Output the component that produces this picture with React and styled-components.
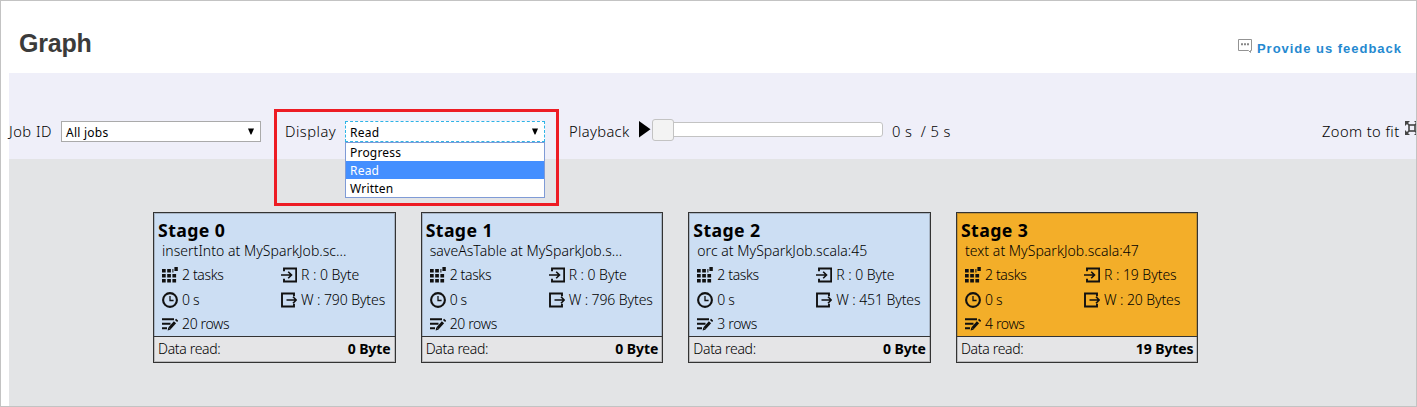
import React from "react";
import styled, { createGlobalStyle } from "styled-components";

const Global = createGlobalStyle`
  * { box-sizing: border-box; }
  body { margin: 0; background: #fff; }
`;

const Frame = styled.main`
  width: 1417px;
  height: 407px;
  border: 1px solid #c3c3c3;
  padding-left: 8px;
  display: flex;
  flex-direction: column;
  overflow: hidden;
  background: #fff;
  color: #000;
  font-family: "Noto Sans", "Open Sans", sans-serif;
`;

const Header = styled.header`
  height: 72px;
  flex: none;
  display: flex;
  justify-content: space-between;
  padding: 0 14px 0 10px;
`;

const Title = styled.h1`
  margin: 27px 0 0;
  font: bold 25px/30px "Liberation Sans", Arial, sans-serif;
  letter-spacing: -0.2px;
  color: #3b3b3b;
`;

const Feedback = styled.a`
  display: flex;
  height: 20px;
  margin-top: 37px;
  gap: 4px;
  color: #2589d0;
  font: bold 13px/22px "Liberation Sans", Arial, sans-serif;
  letter-spacing: 0.98px;
  white-space: nowrap;
`;

const Toolbar = styled.section`
  height: 86px;
  flex: none;
  display: flex;
  align-items: flex-start;
  padding-top: 36px;
  background: #efeff9;
`;

const Label = styled.span`
  font-weight: 350;
  font-size: 14.7px;
  line-height: 22px;
  white-space: pre;
  margin-top: 11px;
  flex: none;
  width: ${(p) => p.$w}px;
  letter-spacing: ${(p) => p.$ls || 0}px;
`;

const Select = styled.div`
  width: 200px;
  height: 21px;
  margin-top: 12px;
  display: flex;
  justify-content: space-between;
  padding: 0 6px 0 4px;
  background: #fff;
  border: 1px ${(p) => (p.$open ? "dashed #2fb4e6" : "solid #aaa")};
  font-size: 12px;
  line-height: 21px;
  letter-spacing: 0.25px;
  flex: none;
`;

const Arrow = styled.svg`
  width: 6px;
  height: 7px;
  margin-top: 6px;
`;

const Highlight = styled.div`
  width: 285px;
  height: 97px;
  margin: 0 10px 0 13px;
  flex: none;
  border: 3px solid #ed1c24;
  display: flex;
  padding-left: 8px;
  position: relative;
  ${Label} { margin-top: 8px; }
  ${Select} { margin-top: 9px; }
`;

const Menu = styled.ul`
  position: absolute;
  z-index: 1;
  left: 68px;
  top: 30px;
  width: 200px;
  margin: 0;
  padding: 0;
  list-style: none;
  background: #fff;
  border: 1px solid #7f9bd6;
`;

const Option = styled.li`
  height: 18px;
  padding-left: 4px;
  font-size: 12px;
  line-height: 19px;
  letter-spacing: 0.2px;
  color: ${(p) => (p.$active ? "#fff" : "#000")};
  background: ${(p) => (p.$active ? "#448fff" : "#fff")};
`;

const Play = styled.svg`
  width: 12px;
  height: 17px;
  margin: 12px 1px 0 0;
  flex: none;
`;

const Track = styled.div`
  width: 231px;
  height: 15px;
  margin: 13px 9px 0 0;
  flex: none;
  display: flex;
  align-items: center;
  background: #fff;
  border: 1px solid #c3c3c3;
  border-radius: 3px;
`;

const Thumb = styled.div`
  width: 22px;
  height: 22px;
  margin: -5px 0 -5px -1px;
  flex: none;
  background: #f3f3f3;
  border: 1px solid #c3c3c3;
  border-radius: 3px;
`;

const Spacer = styled.div`
  flex: 1;
`;

const FitIcon = styled.svg`
  width: 14px;
  height: 14px;
  margin: 12px -3px 0 0;
  flex: none;
`;

const Canvas = styled.section`
  flex: 1;
  display: flex;
  align-items: flex-start;
  gap: 25.17px;
  padding: 53px 0 0 144px;
  background: #e3e4e6;
`;

const Card = styled.article`
  width: 242.5px;
  height: 151px;
  flex: none;
  border: 1.5px solid #333;
  outline: 1px solid rgba(60, 60, 60, 0.25);
  outline-offset: -2px;
  background: ${(p) => (p.$active ? "#f3ae29" : "#ccdef3")};
  display: flex;
  flex-direction: column;
  white-space: pre;
`;

const CardBody = styled.div`
  height: 123px;
  padding: 6px 0 0 4px;
  flex: none;
`;

const StageName = styled.h2`
  margin: 0;
  font-size: 17.7px;
  line-height: 22px;
  font-weight: 700;
  letter-spacing: 0.4px;
`;

const Detail = styled.p`
  margin: 0;
  padding-left: 4px;
  font-size: 14px;
  line-height: 19px;
  font-weight: 350;
  letter-spacing: 0.04px;
`;

const Stats = styled.div`
  display: grid;
  grid-template-columns: 119px 1fr;
  grid-template-rows: 25px 25px 24px;
  margin: 2px 0 0 4px;
`;

const Stat = styled.div`
  display: flex;
  align-items: center;
  gap: 4px;
  font-size: 14px;
  line-height: 20px;
  font-weight: 350;
  letter-spacing: ${(p) => p.$ls || 0}px;
  svg { width: 16px; height: 16px; flex: none; }
`;

const CardFooter = styled.footer`
  flex: 1;
  border-top: 1px solid #333;
  background: #e5e5e7;
  display: flex;
  justify-content: space-between;
  padding: 0 4px;
  font-size: 14px;
  line-height: 24px;
  font-weight: 350;
  letter-spacing: -0.32px;
`;

const Total = styled.b`
  font-weight: 700;
  letter-spacing: -0.1px;
`;

const DownArrow = () => (
  <Arrow viewBox="0 0 6 7"><path d="M0 0.5h6L3.4 6.5h-.8z" fill="#000" /></Arrow>
);

const ChatIcon = () => (
  <svg width="15" height="15" viewBox="0 0 15 15" fill="none" stroke="#939393">
    <path d="M.5 1.5h13v11h-1v2l-2-2H.5z" />
    <path d="M3 6.3h9" stroke="#888" strokeWidth="2" strokeDasharray="2 1" />
  </svg>
);

const TasksIcon = () => (
  <svg viewBox="0 0 16 16" fill="#111">
    {[2, 7, 12].map((y) => [0, 5.2, 10.4].map((x) => (
      <rect key={x + "-" + y} x={x} y={y} width={x > 10 && y === 2 ? 1 : 3.7} height="3.5" />
    )))}
    <rect x="12.4" y="0" width="3.4" height="4" />
  </svg>
);

const ClockIcon = () => (
  <svg viewBox="0 0 16 16" fill="none" stroke="#111">
    <circle cx="8" cy="8" r="6.9" strokeWidth="2.1" />
    <path d="M8 4v4.5h3.6" strokeWidth="1.3" />
  </svg>
);

const RowsIcon = () => (
  <svg viewBox="0 0 16 16" fill="none" stroke="#111">
    <path d="M0 3.2h12M0 7.7h8.5M0 12.2h5" strokeWidth="2" />
    <path d="M7.6 12.2l5.4-6" strokeWidth="3" />
    <path d="M14 5l1.2-1.3" strokeWidth="3" />
    <path d="M5.6 14.4l.7-3.2 2.6 2.2z" fill="#111" stroke="none" />
  </svg>
);

const ReadIcon = () => (
  <svg viewBox="0 0 16 16" fill="none" stroke="#111">
    <path d="M3 4.2V1.5h12.2v13H3v-2.7" strokeWidth="1.9" />
    <path d="M0 8h10.5M7.2 4.8L10.5 8l-3.3 3.2" strokeWidth="1.6" />
  </svg>
);

const WriteIcon = () => (
  <svg viewBox="0 0 16 16" fill="none" stroke="#111">
    <path d="M13 4.2V1.5H1v13h12v-2.7" strokeWidth="1.9" />
    <path d="M5.5 8h9.7M12 4.8L15.2 8 12 11.2" strokeWidth="1.6" />
  </svg>
);

const stages = [
  { name: "Stage 0", detail: "insertInto at MySparkJob.sc...", rows: "20 rows", read: "0 Byte", written: "790 Bytes" },
  { name: "Stage 1", detail: "saveAsTable at MySparkJob.s...", rows: "20 rows", read: "0 Byte", written: "796 Bytes" },
  { name: "Stage 2", detail: "orc at MySparkJob.scala:45", rows: "3 rows", read: "0 Byte", written: "451 Bytes" },
  { name: "Stage 3", detail: "text at MySparkJob.scala:47", rows: "4 rows", read: "19 Bytes", written: "20 Bytes", active: true },
];

const StageCard = ({ stage }) => (
  <Card $active={stage.active}>
    <CardBody>
      <StageName>{stage.name}</StageName>
      <Detail>{stage.detail}</Detail>
      <Stats>
        <Stat $ls={-0.35}><TasksIcon />2 tasks</Stat>
        <Stat $ls={-0.05}><ReadIcon />R : {stage.read}</Stat>
        <Stat $ls={-0.35}><ClockIcon />0 s</Stat>
        <Stat $ls={-0.1}><WriteIcon />W : {stage.written}</Stat>
        <Stat $ls={-0.35}><RowsIcon />{stage.rows}</Stat>
      </Stats>
    </CardBody>
    <CardFooter><span>Data read:</span><Total>{stage.read}</Total></CardFooter>
  </Card>
);

export default function App() {
  return (
    <Frame>
      <Global />
      <Header>
        <Title>Graph</Title>
        <Feedback><ChatIcon /><span>Provide us feedback</span></Feedback>
      </Header>
      <Toolbar>
        <Label $w={52} $ls={0.5}>Job ID</Label>
        <Select><span>All jobs</span><DownArrow /></Select>
        <Highlight>
          <Label $w={60} $ls={0.5}>Display</Label>
          <Select $open><span>Read</span><DownArrow /></Select>
          <Menu>
            <Option>Progress</Option>
            <Option $active>Read</Option>
            <Option>Written</Option>
          </Menu>
        </Highlight>
        <Label $w={70} $ls={0.35}>Playback</Label>
        <Play viewBox="0 0 12 17"><path d="M0 0l11.5 8.2L0 16.5z" /></Play>
        <Track><Thumb /></Track>
        <Label $w={60} $ls={0.4}>0 s  / 5 s</Label>
        <Spacer />
        <Label $w={83} $ls={0.4}>Zoom to fit</Label>
        <FitIcon viewBox="0 0 14 14" fill="none" stroke="#444">
          <rect x="4" y="4" width="6" height="6" strokeWidth="1.6" />
          <path d="M4 4L1 1M10 4l3-3M4 10l-3 3M10 10l3 3" strokeWidth="1.6" />
          <path d="M0 5V0h5zM14 5V0H9zM0 9v5h5zM14 9v5H9z" fill="#444" stroke="none" />
        </FitIcon>
      </Toolbar>
      <Canvas>
        {stages.map((s) => <StageCard key={s.name} stage={s} />)}
      </Canvas>
    </Frame>
  );
}
